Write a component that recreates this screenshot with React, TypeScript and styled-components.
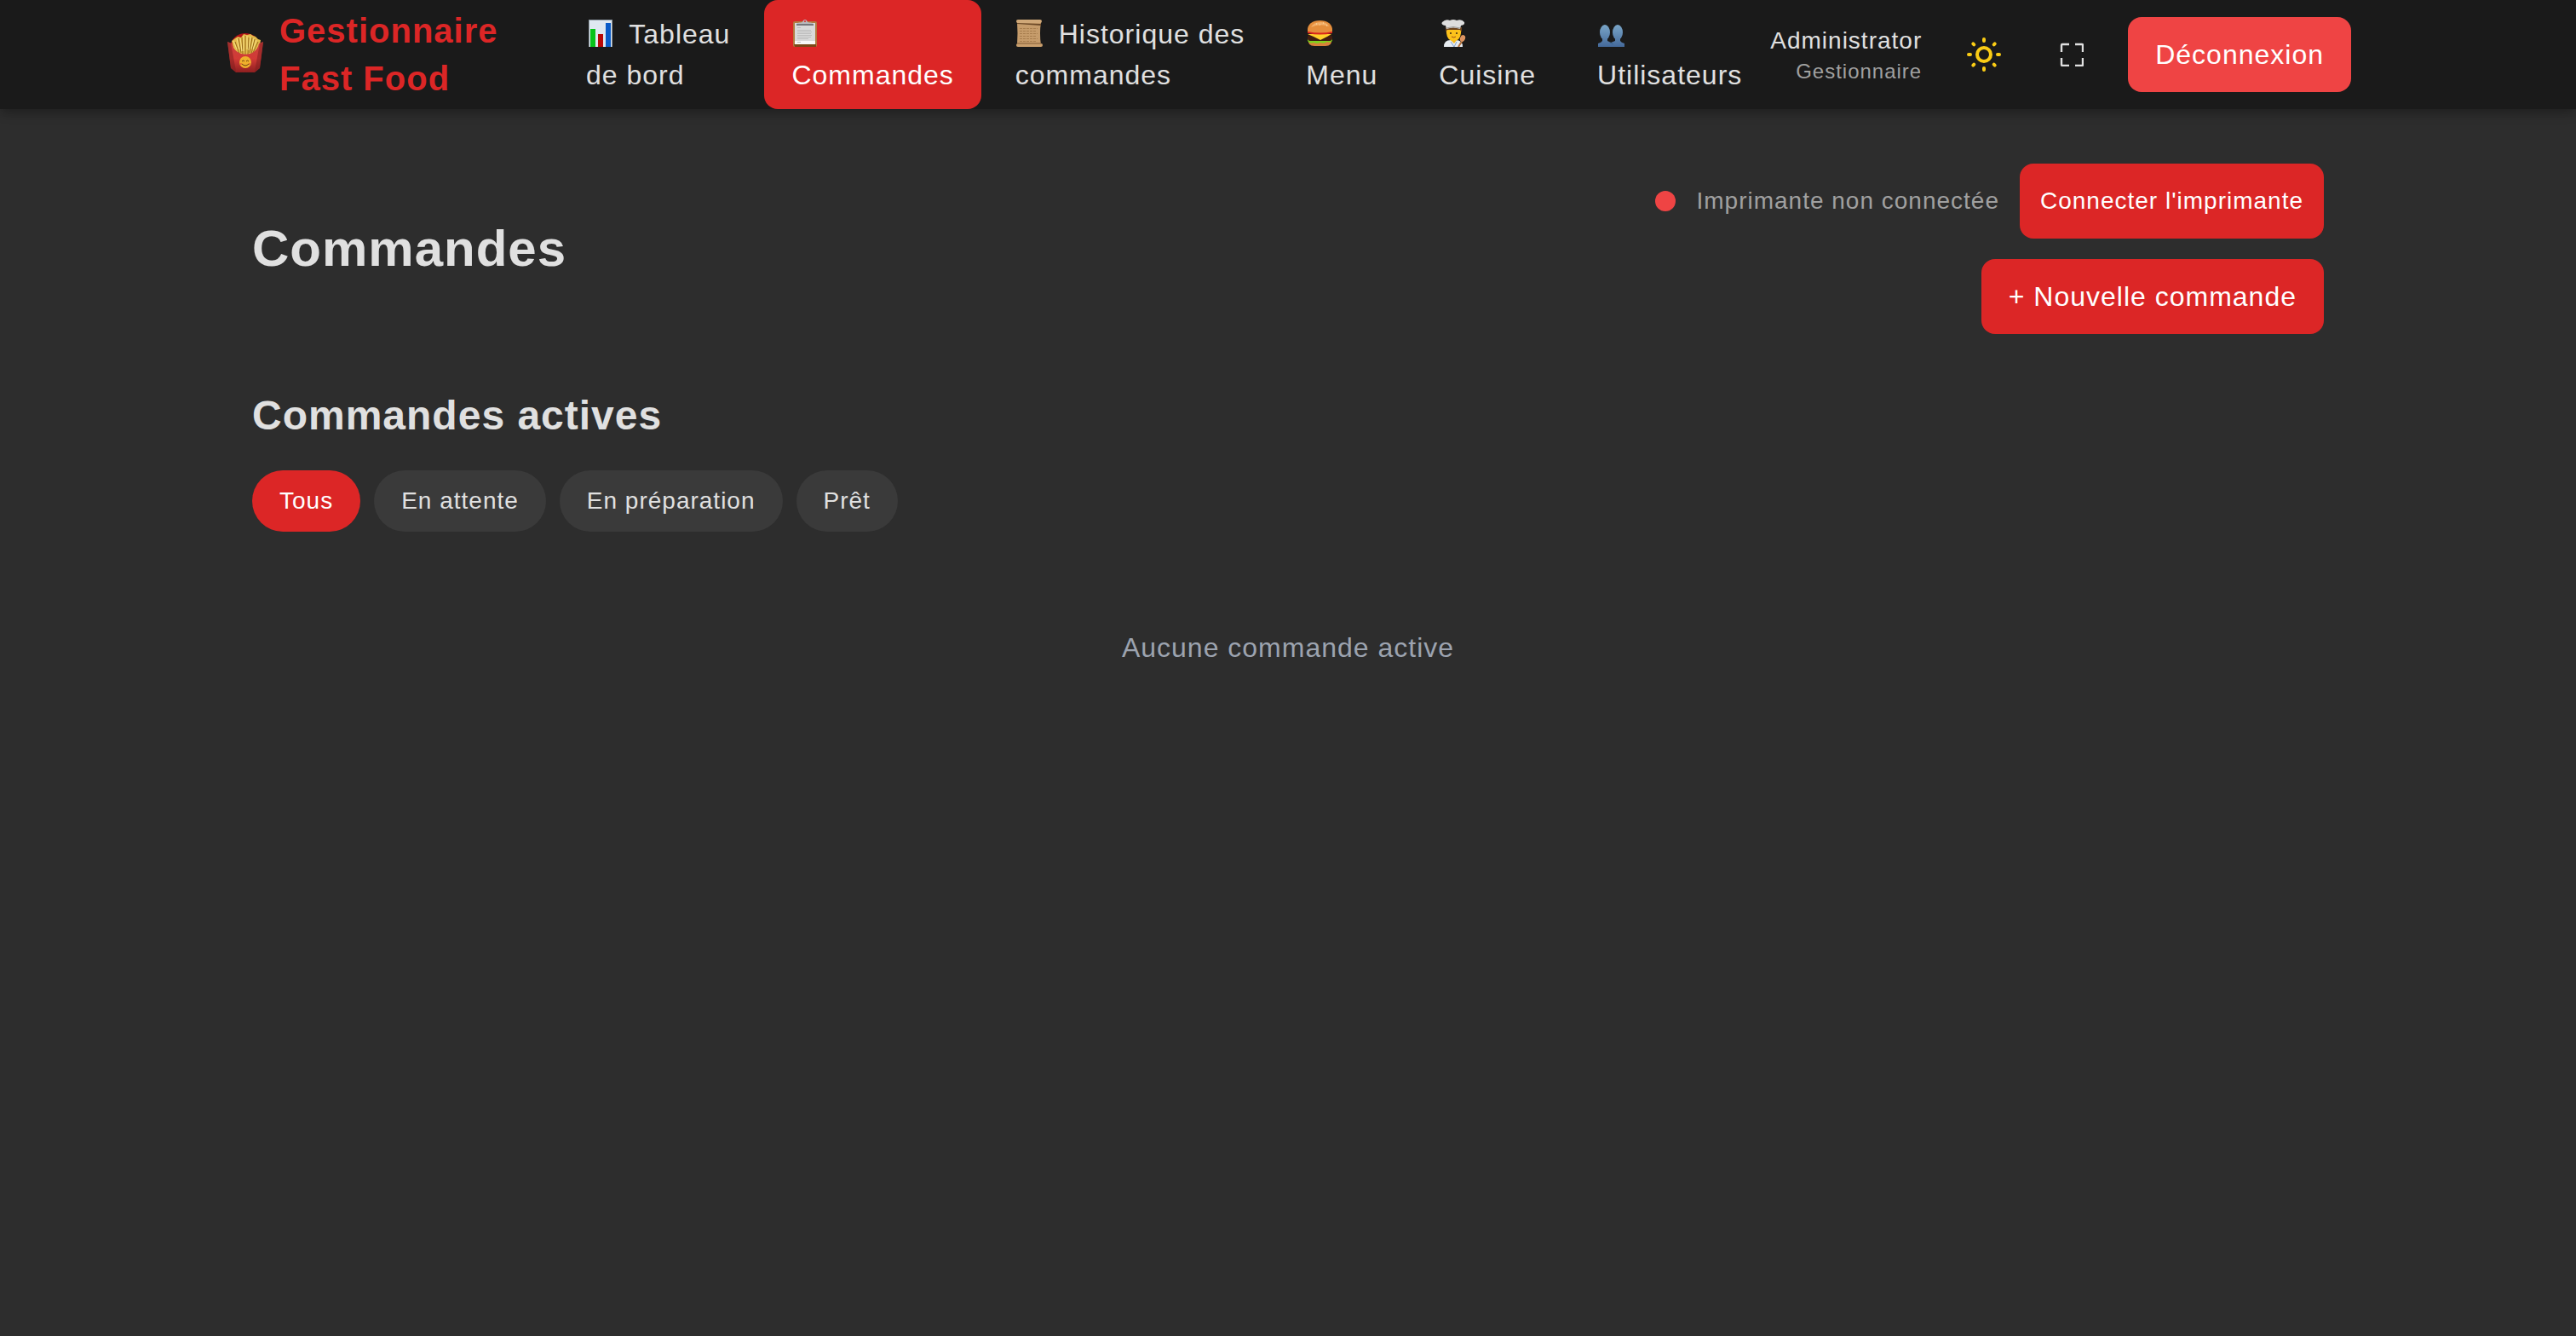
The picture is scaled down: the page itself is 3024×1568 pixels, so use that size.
import React, { useState } from "react";
import styled, { createGlobalStyle } from "styled-components";

const GlobalStyle = createGlobalStyle`
  *, *::before, *::after { box-sizing: border-box; }
  body {
    margin: 0;
    background: #2d2d2d;
    color: #e0e0e0;
    font-family: "Liberation Sans", Helvetica, Arial, sans-serif;
    font-size: 32px;
    line-height: 48px;
    letter-spacing: 1px;
  }
  button { font: inherit; letter-spacing: inherit; border: 0; cursor: pointer; }
  h1, h2, p { margin: 0; }
`;

const Page = styled.div`
  min-height: 100vh;
`;

const TopBar = styled.header`
  background: #1a1a1a;
  box-shadow: 0 8px 12px -2px rgba(0, 0, 0, 0.2), 0 4px 8px -2px rgba(0, 0, 0, 0.12);
`;

const TopBarInner = styled.div`
  display: flex;
  align-items: center;
  justify-content: space-between;
  max-width: 2560px;
  margin: 0 auto;
  padding: 0 32px;
`;

const BarGroup = styled.div`
  display: flex;
  align-items: center;
`;

const Brand = styled.a`
  display: flex;
  align-items: center;
  gap: 16px;
  width: 344px;
  margin-right: 48px;
  color: #dc2626;
  font-size: 40px;
  line-height: 56px;
  font-weight: 700;
  text-decoration: none;
`;

const BrandIcon = styled.svg`
  flex: none;
  width: 48px;
  height: 50px;
`;

const Nav = styled.nav`
  display: flex;
  gap: 8px;
`;

const NavLink = styled.a<{ $active?: boolean }>`
  width: min-content;
  padding: 16px 32px;
  border-radius: 16px;
  background: ${(p) => (p.$active ? "#dc2626" : "transparent")};
  color: ${(p) => (p.$active ? "#ffffff" : "#e0e0e0")};
  text-decoration: none;
`;

const Together = styled.span`
  white-space: nowrap;
`;

const Emoji = styled.svg`
  width: 32px;
  height: 32px;
  margin-right: 9px;
  vertical-align: -4px;
`;

const Account = styled.div`
  display: flex;
  align-items: center;
  gap: 36px;
`;

const User = styled.div`
  text-align: right;
`;

const UserName = styled.p`
  font-size: 28px;
  line-height: 40px;
`;

const UserRole = styled.p`
  color: #a0a0a0;
  font-size: 24px;
  line-height: 32px;
`;

const IconButton = styled.button<{ $width: number; $color: string }>`
  display: flex;
  align-items: center;
  justify-content: center;
  width: ${(p) => p.$width}px;
  height: 88px;
  padding: 0;
  background: transparent;
  color: ${(p) => p.$color};
`;

const Button = styled.button<{ $tone?: string; $small?: boolean }>`
  height: 88px;
  padding: 0 ${(p) => (p.$small ? 24 : 32)}px;
  border-radius: 16px;
  background: ${(p) => p.$tone ?? "#dc2626"};
  color: #ffffff;
  font-size: ${(p) => (p.$small ? 28 : 32)}px;
  white-space: nowrap;
`;

const Main = styled.main`
  max-width: 2560px;
  margin: 0 auto;
  padding: 64px;
`;

const PageHead = styled.div`
  display: flex;
  align-items: center;
  justify-content: space-between;
  margin-bottom: 64px;
`;

const Title = styled.h1`
  font-size: 60px;
  line-height: 72px;
`;

const Actions = styled.div`
  display: flex;
  flex-direction: column;
  align-items: flex-end;
  gap: 24px;
`;

const Printer = styled.div`
  display: flex;
  align-items: center;
  gap: 24px;
`;

const Dot = styled.span`
  width: 24px;
  height: 24px;
  border-radius: 50%;
  background: #ef4444;
`;

const PrinterStatus = styled.span`
  color: #a0a0a0;
  font-size: 28px;
  line-height: 40px;
`;

const SectionTitle = styled.h2`
  margin-bottom: 32px;
  font-size: 48px;
  line-height: 64px;
`;

const Filters = styled.div`
  display: flex;
  gap: 16px;
  margin-bottom: 48px;
`;

const Pill = styled.button<{ $active: boolean }>`
  padding: 16px 32px;
  border-radius: 36px;
  background: ${(p) => (p.$active ? "#dc2626" : "#3a3a3a")};
  color: ${(p) => (p.$active ? "#ffffff" : "#e0e0e0")};
  font-size: 28px;
  line-height: 40px;
`;

const Empty = styled.p`
  padding: 64px 0;
  color: #9ca3af;
  text-align: center;
`;

const Fries = () => (
  <BrandIcon viewBox="0 0 48 50" aria-hidden="true">
    <defs>
      <linearGradient id="carton" x1="0" y1="0" x2="0" y2="1">
        <stop offset="0" stopColor="#c9413d" />
        <stop offset="0.55" stopColor="#d23a36" />
        <stop offset="1" stopColor="#8e1f20" />
      </linearGradient>
    </defs>
    <path d="M7 12C12 -4 36 -4 41 12L38 24H10Z" fill="#b01216" />
    <path d="M8 9l4-3 3-2 4 1 3-4 4 1 4-1 3 2 3 1 3 3 3 1-3 18H12Z" fill="#e3bb4a" />
    <g stroke="#96691a" strokeWidth="1">
      <path d="M12 10l5 14M16 6l3 17M20 5l1 20M24 3v22M28 5l-1 20M32 5l-3 18M35 7l-4 17M39 10l-6 13" />
    </g>
    <g stroke="#f6e088" strokeWidth="1">
      <path d="M10 9l4 10M14 6l3 13M18 6l2 15M22 3v18M26 3v16M30 4l-2 16M34 6l-3 12M37 8l-4 11" />
    </g>
    <path d="M3 10l5 2C12 29 37 29 40 12l5-2-4 31-6 5H13l-6-5Z" fill="url(#carton)" />
    <path d="M3 10l4 2 3 16 3 17-6-4ZM45 10l-4 2-3 16-3 17 6-4Z" fill="#7c1b1e" opacity="0.5" />
    <circle cx="24" cy="34" r="7" fill="#efb02c" />
    <path d="M20 33q1.500-2 3 0M25 33q1.500-2 3 0M20 36q4 4 8 0" fill="none" stroke="#6b3d10" strokeWidth="1" />
    <path d="M18 36h2M28 36h2" stroke="#e87830" strokeWidth="2" />
  </BrandIcon>
);

const ChartEmoji = () => (
  <Emoji viewBox="0 0 32 32" aria-hidden="true">
    <path d="M3 0h28v32H3z" fill="#8f9aa3" />
    <path d="M4 1h26v31H4z" fill="#dfe8f1" />
    <path d="M5 11h6v21H5z" fill="#08c21a" />
    <path d="M14 17h6v15h-6z" fill="#b80808" />
    <path d="M23 4h6v28h-6z" fill="#0a5bc8" />
  </Emoji>
);

const ClipboardEmoji = () => (
  <Emoji viewBox="0 0 32 32" aria-hidden="true">
    <rect x="2" y="2" width="28" height="30" rx="2" fill="#b27a40" />
    <path d="M3 29h26v3H4z" fill="#7a4818" />
    <path d="M4 4h24v25H4z" fill="#d9d9d9" />
    <path d="M4 25h24v4H4z" fill="#f8f8f8" />
    <g stroke="#bdbdbd" strokeWidth="1">
      <path d="M7 9.500h4M7 12.500h16M7 14.500h17M7 16.500h16M7 18.500h17M7 20.500h16M7 22.500h13M7 26.500h4" />
    </g>
    <path d="M6 6c0-3 4-2 7-3 1-4 5-4 6 0 3 1 7 0 7 3Z" fill="#b9b9bd" />
    <path d="M6 5h20v2H6z" fill="#77777c" />
    <circle cx="16" cy="2" r="1" fill="#dc2626" />
  </Emoji>
);

const ScrollEmoji = () => (
  <Emoji viewBox="0 0 32 32" aria-hidden="true">
    <path d="M2 3h28q-2 13 0 27H2q1-14 0-27Z" fill="#c69c6b" />
    <g stroke="#a87e4e" strokeWidth="1">
      <path d="M5 10.500h21M5 13.500h20M5 16.500h21M5 19.500h20M5 22.500h21M5 25.500h20" strokeDasharray="3 1" />
    </g>
    <rect x="1" y="0" width="30" height="4" rx="2" fill="#d0a878" />
    <path d="M2 4l28 1v2L2 5z" fill="#6d4a28" />
    <rect x="1" y="28" width="31" height="4" rx="2" fill="#c99f6d" />
    <path d="M2 28h28" stroke="#805a34" />
  </Emoji>
);

const BurgerEmoji = () => (
  <Emoji viewBox="0 0 32 32" aria-hidden="true">
    <path d="M3 23h27q1 8-7 8H10Q2 31 3 23Z" fill="#d9813a" />
    <path d="M2 22q14 3 29 0v3q-3 3-6 1-4 3-8 1-4 2-8 0-4 2-7-2Z" fill="#7fd01c" />
    <rect x="2" y="18" width="29" height="7" rx="3" fill="#3f1d10" />
    <path d="M2 17h28l-5 3-8 4-8-4Z" fill="#ffd02a" />
    <path d="M2 14h29v2q-14 3-29 0Z" fill="#d8241c" />
    <path d="M2 14C1 5 8 1 16.500 1S32 5 31 14q-14 3-29 0Z" fill="#e58e3c" />
    <path d="M6 9Q9 3 17 3t10 5Q16 4 6 9Z" fill="#f3b069" />
    <path d="M12 5h1M20 4h1M24 7h1M16 6h1" stroke="#fbe3b5" />
  </Emoji>
);

const CookEmoji = () => (
  <Emoji viewBox="0 0 32 32" aria-hidden="true">
    <path d="M6 32q0-8 8-8h6q8 0 8 8Z" fill="#e8edf2" />
    <path d="M14 22h7v2l-3 4-4-4Z" fill="#f5b81c" />
    <path d="M14 26l4 6M21 26l-3 6" stroke="#7d9fd0" strokeWidth="1" />
    <path d="M9 10h17v6q-1 9-8.500 9T9 16Z" fill="#fcc21b" />
    <path d="M8 9h19v6l-2-3H10l-2 3Z" fill="#6b431f" />
    <path d="M10 12h15v3H10z" fill="#fcc21b" />
    <circle cx="14" cy="16" r="1" fill="#3a2410" />
    <circle cx="21" cy="16" r="1" fill="#3a2410" />
    <path d="M15 20q3 2 5 0" fill="none" stroke="#9b4a14" strokeWidth="1" />
    <path d="M9 11L8 7Q2 6 4 3 8-1 13 1q4-2 8 0 6-2 9 2 1 3-4 4l-1 4Q17 8 9 11Z" fill="#dedede" />
    <path d="M9 10q8-3 16 0" fill="none" stroke="#9a9a9a" />
    <path d="M28 24l-5 8" stroke="#b5713c" strokeWidth="2" />
    <ellipse cx="28" cy="22" rx="3" ry="4" transform="rotate(20 28 22)" fill="#dc9460" />
  </Emoji>
);

const PeopleEmoji = () => (
  <Emoji viewBox="0 0 32 32" aria-hidden="true">
    <defs>
      <linearGradient id="bust" gradientUnits="userSpaceOnUse" x1="0" y1="6" x2="0" y2="32">
        <stop offset="0" stopColor="#7aa6c8" />
        <stop offset="1" stopColor="#44699a" />
      </linearGradient>
    </defs>
    <g fill="url(#bust)">
      <ellipse cx="9" cy="15" rx="6" ry="9" />
      <ellipse cx="24" cy="15" rx="6" ry="9" />
      <path d="M6 20h6v5l4 2 5-2v-5h6v5q1 2 5 3v4H1v-4q4-1 5-3Z" />
    </g>
    <path d="M15 27l4 2" stroke="#37628f" />
  </Emoji>
);

const SunIcon = () => (
  <svg width="40" height="40" viewBox="0 0 40 40" fill="none" stroke="#facc15" strokeWidth="4" strokeLinecap="round" aria-hidden="true">
    <circle cx="20" cy="20" r="8" />
    <path d="M20 2v2M20 36v2M2 20h2M36 20h2M7.300 7.300l1 1M31.700 31.700l1 1M7.300 32.700l1-1M31.700 8.300l1-1" />
  </svg>
);

const FullscreenIcon = () => (
  <svg width="28" height="28" viewBox="0 0 28 28" fill="none" stroke="currentColor" strokeWidth="2.4" strokeLinejoin="round" aria-hidden="true">
    <path d="M2 11V3q0-1 1-1h8M18 2h8q1 0 1 1v8M27 18v8q0 1-1 1h-8M11 27H3q-1 0-1-1v-8" />
  </svg>
);

const FILTERS = ["Tous", "En attente", "En préparation", "Prêt"];

export default function App() {
  const [filter, setFilter] = useState("Tous");

  return (
    <Page>
      <GlobalStyle />
      <TopBar>
        <TopBarInner>
          <BarGroup>
            <Brand href="#accueil">
              <Fries />
              <span>Gestionnaire Fast Food</span>
            </Brand>
            <Nav aria-label="Navigation principale">
              <NavLink href="#tableau">
                <Together>
                  <ChartEmoji /> Tableau
                </Together>{" "}
                de bord
              </NavLink>
              <NavLink href="#commandes" $active aria-current="page">
                <ClipboardEmoji /> Commandes
              </NavLink>
              <NavLink href="#historique">
                <Together>
                  <ScrollEmoji /> Historique des
                </Together>{" "}
                commandes
              </NavLink>
              <NavLink href="#menu">
                <BurgerEmoji /> Menu
              </NavLink>
              <NavLink href="#cuisine">
                <CookEmoji /> Cuisine
              </NavLink>
              <NavLink href="#utilisateurs">
                <PeopleEmoji /> Utilisateurs
              </NavLink>
            </Nav>
          </BarGroup>
          <Account>
            <User>
              <UserName>Administrator</UserName>
              <UserRole>Gestionnaire</UserRole>
            </User>
            <IconButton type="button" $width={74} $color="#facc15" aria-label="Changer de thème">
              <SunIcon />
            </IconButton>
            <IconButton type="button" $width={60} $color="#e0e0e0" aria-label="Plein écran">
              <FullscreenIcon />
            </IconButton>
            <Button type="button" $tone="#ef4444">
              Déconnexion
            </Button>
          </Account>
        </TopBarInner>
      </TopBar>

      <Main>
        <PageHead>
          <Title>Commandes</Title>
          <Actions>
            <Printer>
              <Dot />
              <PrinterStatus>Imprimante non connectée</PrinterStatus>
              <Button type="button" $small>
                Connecter l'imprimante
              </Button>
            </Printer>
            <Button type="button">+ Nouvelle commande</Button>
          </Actions>
        </PageHead>

        <SectionTitle>Commandes actives</SectionTitle>
        <Filters>
          {FILTERS.map((name) => (
            <Pill key={name} type="button" $active={name === filter} aria-pressed={name === filter} onClick={() => setFilter(name)}>
              {name}
            </Pill>
          ))}
        </Filters>
        <Empty>Aucune commande active</Empty>
      </Main>
    </Page>
  );
}
